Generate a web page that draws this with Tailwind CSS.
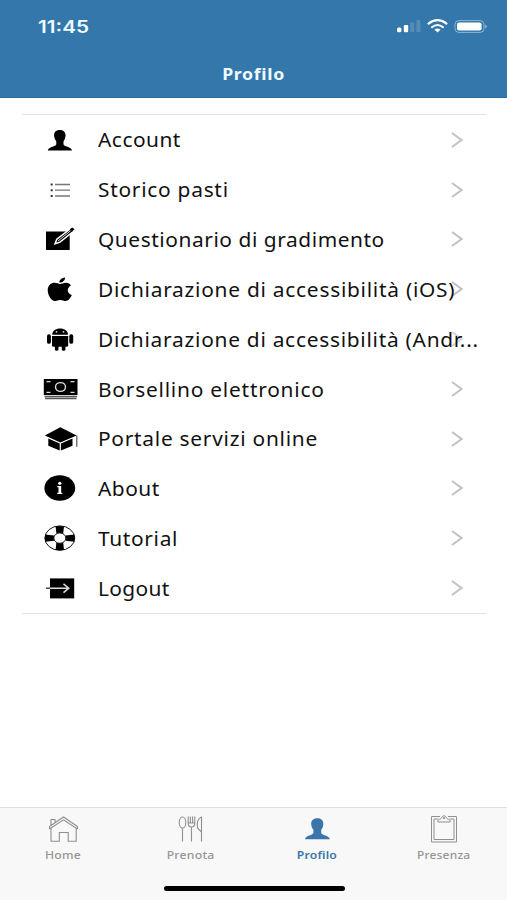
<!DOCTYPE html>
<html lang="it">
<head>
  <meta charset="UTF-8">
  <title>Profilo</title>
  <meta name="viewport" content="width=device-width,initial-scale=1">
  <script src="https://cdn.jsdelivr.net/npm/@tailwindcss/browser@4"></script>
</head>
<body class="bg-white font-['Noto_Sans',sans-serif] text-[#111]">
  <div class="w-[507px] h-[900px] flex flex-col overflow-hidden">
    <!-- status bar + title -->
    <header class="h-[98px] shrink-0 bg-[#3477ab] border-b border-[#2c6799] text-white">
      <div class="h-[52px] flex items-center justify-between pl-[38px] pr-[20px]">
        <span class="inline-block origin-left scale-x-[1.22] pt-px font-['Inter',sans-serif] text-[17px] leading-6 font-semibold text-[#eefaff]">11:45</span>
        <svg class="w-[92px] h-[16px]" viewBox="0 0 92 16" fill="#fff">
          <rect x="2" y="9.5" width="4.4" height="4.8" rx="1.5"/>
          <rect x="8.8" y="7" width="4.4" height="7.3" rx="1.2"/>
          <rect x="15.2" y="4.3" width="4" height="10" rx="1" opacity=".16"/>
          <rect x="21.4" y="2" width="4" height="12.3" rx="1" opacity=".16"/>
          <path d="M33.6 5.6c5.4-4.6 12.4-4.6 17.8 0" fill="none" stroke="#fff" stroke-width="2.3" stroke-linecap="round"/>
          <path d="M36.9 9.2c3.5-2.8 7.7-2.8 11.2 0" fill="none" stroke="#fff" stroke-width="2.1" stroke-linecap="round"/>
          <path d="M39.4 11.6q3.1-2.2 6.2 0l-3.1 2.800z"/>
          <rect x="60" y="2.6" width="29" height="11.8" rx="3.8" fill="none" stroke="#fff" stroke-opacity=".45"/>
          <rect x="62" y="4.5" width="24.6" height="8" rx="2"/>
          <path d="M90.3 6.6q3 1.9 0 3.8z" opacity=".5"/>
        </svg>
      </div>
      <h1 class="h-[44px] flex justify-center items-center pt-px text-[15.5px] font-bold text-[#eefaff]"><span class="inline-block scale-x-[1.14] tracking-[0.6px]">Profilo</span></h1>
    </header>

    <!-- menu -->
    <main class="flex-1 px-[22px] pt-4">
      <ul class="w-[464px] h-[500px] grid grid-rows-10 border-y border-[#e4e4e4] text-[19px] whitespace-nowrap">
        <li class="flex items-center pl-[21px]">
          <svg class="w-9 h-7 shrink-0" viewBox="0 0 36 28"><path d="M16.8 4c4 0 5.900 2.300 5.700 5.800-.2 2.600-1 4.200-2 5.600v2.800c0 2.400 8 2.400 8.500 6.200H4.800c.5-3.800 8.500-3.800 8.500-6.200v-2.800c-1-1.400-2-3-2.200-5.600C10.900 6.300 12.800 4 16.800 4z"/></svg>
          <span class="w-[353px] ml-[19px] pt-px"><span class="inline-block origin-left scale-x-[1.1] tracking-[0.45px]">Account</span></span>
          <svg class="w-3 h-4" viewBox="0 0 12 16" fill="none" stroke="#c2c2c2" stroke-width="2"><path d="M1 1l9.500 7L1 15"/></svg>
        </li>
        <li class="flex items-center pl-[21px]">
          <svg class="w-9 h-7 shrink-0" viewBox="0 0 36 28"><path d="M12 8.500h15M12 14.200h15M12 20h15" stroke="#777" stroke-width="1.300"/><path d="M7.700 7.500h2v2h-2zM7.700 13.200h2v2h-2zM7.700 19h2v2h-2z" fill="#333"/></svg>
          <span class="w-[353px] ml-[19px] pt-[2px]"><span class="inline-block origin-left scale-x-[1.1] tracking-[0.66px]">Storico pasti</span></span>
          <svg class="w-3 h-4" viewBox="0 0 12 16" fill="none" stroke="#c2c2c2" stroke-width="2"><path d="M1 1l9.500 7L1 15"/></svg>
        </li>
        <li class="flex items-center pl-[21px]">
          <svg class="w-9 h-7 shrink-0" viewBox="0 0 36 28"><path d="M3 6.500h23.700V25H3z"/><path d="M12 18.800l1.800-4.600L27.500 3.600l3.300 2.500L17 17.200z" stroke="#fff" stroke-width="1.500"/><path d="M15 16L27.500 5.800" stroke="#ddd" stroke-width="1"/><path d="M26.800 4.200l2.500-1.800 2.200 1.800-2.400 2.200z"/></svg>
          <span class="w-[353px] ml-[19px] pt-[2px]"><span class="inline-block origin-left scale-x-[1.1] tracking-[0.5px]">Questionario di gradimento</span></span>
          <svg class="w-3 h-4" viewBox="0 0 12 16" fill="none" stroke="#c2c2c2" stroke-width="2"><path d="M1 1l9.500 7L1 15"/></svg>
        </li>
        <li class="flex items-center pl-[21px]">
          <svg class="w-9 h-7 shrink-0" viewBox="0 0 36 28"><path d="M22 2.500c.2 2.700-2.300 5.200-5.700 5.100C16.100 5.200 18.700 2.800 22 2.500z"/><path d="M28 10.400c-4.800 2.700-4 8 .8 9.600-1.300 3.100-3.600 6-6.200 6-2 0-2.900-1.100-5.400-1.100S13.600 26 11.800 26C8.400 26 4.700 20 4.700 15.200c0-4.900 3.500-7.400 7-7.400 2.200 0 3.900 1.200 5.400 1.200 1.400 0 3.400-1.300 6.100-1.300 1.900 0 3.700.9 4.800 2.700z"/></svg>
          <span class="w-[353px] ml-[19px] pt-[2px] relative z-10"><span class="inline-block origin-left scale-x-[1.1] tracking-[0.67px]">Dichiarazione di accessibilità (iOS)</span></span>
          <svg class="w-3 h-4" viewBox="0 0 12 16" fill="none" stroke="#c2c2c2" stroke-width="2"><path d="M1 1l9.500 7L1 15"/></svg>
        </li>
        <li class="flex items-center pl-[21px]">
          <svg class="w-9 h-7 shrink-0" viewBox="0 0 36 28"><path d="M9.200 9.800c.2-4 3.600-6.200 7.900-6.200s7.700 2.200 7.900 6.200z"/><circle cx="13.500" cy="6.800" r=".9" fill="#ddd"/><circle cx="20.500" cy="6.800" r=".9" fill="#ddd"/><path d="M9 10.900h16.200v9.300q0 1.600-1.800 1.600H10.800q-1.800 0-1.800-1.600z"/><rect x="4" y="9.300" width="3.900" height="9.500" rx="1.900"/><rect x="26.300" y="9.300" width="3.900" height="9.500" rx="1.900"/><rect x="11.900" y="17" width="3.600" height="8.800" rx="1.600"/><rect x="18.800" y="17" width="3.600" height="8.800" rx="1.600"/></svg>
          <span class="w-[353px] ml-[19px] pt-[2px] relative z-10"><span class="inline-block origin-left scale-x-[1.1] tracking-[0.66px]">Dichiarazione di accessibilità (Andr...</span></span>
          <svg class="w-3 h-4" viewBox="0 0 12 16" fill="none" stroke="#d4d4d4" stroke-width="2"><path d="M1 1l9.500 7L1 15"/></svg>
        </li>
        <li class="flex items-center pl-[21px]">
          <svg class="w-9 h-7 shrink-0" viewBox="0 0 36 28"><path d="M.8 4h33.700v16H.8z"/><path d="M1.500 21.500h32.500M2 23.500h31.500" stroke="#555" stroke-width="1.300"/><ellipse cx="17.500" cy="12" rx="5" ry="4.400" fill="none" stroke="#ddd" stroke-width="1.400"/><path d="M3.500 6.700h4M27.500 6.700h4M3.500 17.300h4M27.500 17.300h4" stroke="#ddd" stroke-width="1.200"/></svg>
          <span class="w-[353px] ml-[19px] pt-[2px]"><span class="inline-block origin-left scale-x-[1.1] tracking-[0.7px]">Borsellino elettronico</span></span>
          <svg class="w-3 h-4" viewBox="0 0 12 16" fill="none" stroke="#c2c2c2" stroke-width="2"><path d="M1 1l9.500 7L1 15"/></svg>
        </li>
        <li class="flex items-center pl-[21px]">
          <svg class="w-9 h-7 shrink-0" viewBox="0 0 36 28"><path d="M1.800 10.500L17.300 2.300l16.300 8.200-16.300 7z"/><path d="M5.300 13.400l11.400 5.200v7L5.300 20.700zM29.500 13.400l-11.600 5.200v7l11.600-4.900z"/><path d="M33.800 10.500v11.300" stroke="#555" stroke-width="1.200"/></svg>
          <span class="w-[353px] ml-[19px] pt-[2px]"><span class="inline-block origin-left scale-x-[1.1] tracking-[0.66px]">Portale servizi online</span></span>
          <svg class="w-3 h-4" viewBox="0 0 12 16" fill="none" stroke="#c2c2c2" stroke-width="2"><path d="M1 1l9.500 7L1 15"/></svg>
        </li>
        <li class="flex items-center pl-[21px]">
          <svg class="w-9 h-7 shrink-0" viewBox="0 0 36 28"><ellipse cx="16.800" cy="14" rx="15.400" ry="12.800"/><circle cx="16.800" cy="9.300" r="1.600" fill="#fff"/><path d="M14.300 12h3.900v6.800h1.100V20h-5v-1.200h1.200v-5.600h-1.200z" fill="#fff"/></svg>
          <span class="w-[353px] ml-[19px] pt-[2px]"><span class="inline-block origin-left scale-x-[1.1] tracking-[0.45px]">About</span></span>
          <svg class="w-3 h-4" viewBox="0 0 12 16" fill="none" stroke="#c2c2c2" stroke-width="2"><path d="M1 1l9.500 7L1 15"/></svg>
        </li>
        <li class="flex items-center pl-[21px]">
          <svg class="w-9 h-7 shrink-0" viewBox="0 0 36 28"><ellipse cx="16.800" cy="14.100" rx="14.900" ry="12.200" fill="#fff" stroke="#111"/><path d="M12.600 2.400q4.200-1 8.400 0l-.8 7.200h-6.800zM12.600 25.800q4.200 1 8.400 0l-.8-7.200h-6.800zM2.200 10.500q-1 3.600 0 7.200l8.800-.9v-5.400zM31.400 10.500q1 3.600 0 7.200l-8.800-.9v-5.400z"/><ellipse cx="16.800" cy="14.100" rx="6" ry="5.200" fill="#fff" stroke="#111"/></svg>
          <span class="w-[353px] ml-[19px] pt-[2px]"><span class="inline-block origin-left scale-x-[1.1] tracking-[0.6px]">Tutorial</span></span>
          <svg class="w-3 h-4" viewBox="0 0 12 16" fill="none" stroke="#c2c2c2" stroke-width="2"><path d="M1 1l9.500 7L1 15"/></svg>
        </li>
        <li class="flex items-center pl-[21px]">
          <svg class="w-9 h-7 shrink-0" viewBox="0 0 36 28"><path d="M7 4.400h24.200v20H7z"/><path d="M3 14.200h4" stroke="#444" stroke-width="1.500"/><path d="M7 14.200h18.500M20.500 9.800l5.300 4.400-5.300 4.400" fill="none" stroke="#ddd" stroke-width="1.500"/></svg>
          <span class="w-[353px] ml-[19px] pt-[2px]"><span class="inline-block origin-left scale-x-[1.1] tracking-[0.3px]">Logout</span></span>
          <svg class="w-3 h-4" viewBox="0 0 12 16" fill="none" stroke="#c2c2c2" stroke-width="2"><path d="M1 1l9.500 7L1 15"/></svg>
        </li>
      </ul>
    </main>

    <!-- tab bar -->
    <footer class="h-[93px] shrink-0 bg-[#f8f8f8] border-t border-[#dedede]">
      <nav class="h-[78px] grid grid-cols-4 pt-[7px] text-[11.5px] leading-4 font-medium text-[#969696]">
        <div class="flex flex-col items-center">
          <svg class="w-8 h-8" viewBox="0 0 32 32" fill="none" stroke="#8f8f8f" stroke-width="1.100"><path d="M2.500 14L16.500 4.800l14 9.200M2.500 11.500l14-9.500 14 9.500M2.500 11.500V14M30.500 11.500V14M4 10.500V4.500h4v3.300M4 13.300v13h8.300v-8.800h8.900v8.800h8V13.300"/></svg>
          <span class="scale-x-[1.06] tracking-[0.2px]">Home</span>
        </div>
        <div class="flex flex-col items-center">
          <svg class="w-8 h-8" viewBox="0 0 32 32" fill="none" stroke="#8f8f8f" stroke-width="1.100"><ellipse cx="8.500" cy="7.500" rx="3.300" ry="5.500"/><path d="M8.500 13V26.500"/><path d="M14.200 1.500v6.500q0 4 3.300 4t3.300-4V1.500M16.400 1.500v7M18.600 1.500v7M14.200 8h6.600M17.500 12V26.500"/><path d="M27.500 26.500V2C24 3 22.500 8 23.500 13l4 4"/></svg>
          <span class="scale-x-[1.06] tracking-[0.25px]">Prenota</span>
        </div>
        <div class="flex flex-col items-center text-[#3a76a9]">
          <svg class="w-8 h-8" viewBox="0 0 32 32" fill="currentColor"><path d="M16.300 3.200c4.200 0 6.200 2.400 6 6-.2 2.600-1 4.200-2.100 5.600v3c0 2.600 8.200 2.500 8.700 6.500H3.900c.5-4 8.500-3.900 8.500-6.500v-3c-1.100-1.400-2-3-2.200-5.600-.2-3.600 2-6 6.100-6z"/></svg>
          <span class="scale-x-[1.06] tracking-[0.15px] font-semibold">Profilo</span>
        </div>
        <div class="flex flex-col items-center">
          <svg class="w-8 h-8" viewBox="0 0 32 32" fill="none" stroke="#8f8f8f"><path d="M12 1.500H3.500v25.500h25V1.500H20"/><path d="M10.500 4H6v20.500h20V4H21.500"/><path d="M9.800 7c0-3.500 3.200-2 3.700-4.300q2.500-4 5 0c.5 2.300 3.700.8 3.700 4.300z"/><circle cx="16" cy="3" r=".8"/></svg>
          <span class="scale-x-[1.04] tracking-[0.2px]">Presenza</span>
        </div>
      </nav>
      <div class="w-[181px] h-[5px] ml-[164px] rounded-full bg-black"></div>
    </footer>
  </div>
</body>
</html>
